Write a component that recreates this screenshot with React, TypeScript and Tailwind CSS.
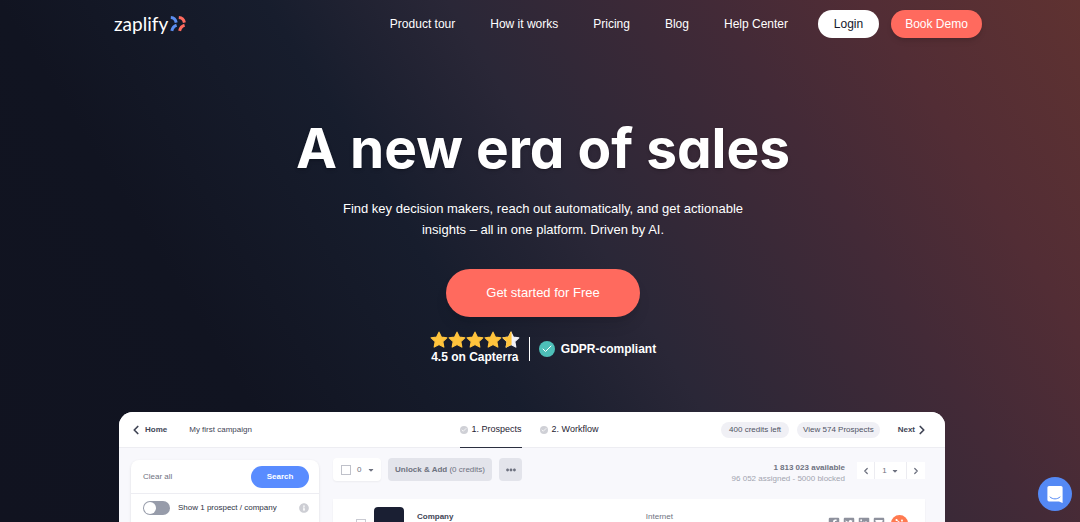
import { Check, ChevronLeft, ChevronRight } from "lucide-react";
import { FaCaretDown, FaEllipsisH, FaFacebookSquare, FaHubspot, FaInfoCircle, FaLinkedin, FaEnvelopeSquare, FaTwitterSquare } from "react-icons/fa";

const navLinks = ["Product tour", "How it works", "Pricing", "Blog", "Help Center"];

const STAR = "M8 1l2.1 4.4 4.9 0.6-3.6 3.4 0.9 4.9L8 11.9 3.7 14.3l0.9-4.9L1 6l4.9-0.6z";
const STAR_LEFT = "M8 1V11.9L3.7 14.3l0.9-4.9L1 6l4.9-0.6z";

function Logo() {
  return (
    <a href="#" className="flex items-center gap-0.5 text-white">
      <span className="font-[Lato,sans-serif] text-[19px] leading-7">zaplify</span>
      <svg viewBox="0 0 16 16" className="h-4 w-4" fill="none" strokeWidth="3">
        <path d="M0.8 1.6C3.8 1.8 5.6 3.4 6.2 6.6" stroke="#5b8def" />
        <path d="M6.6 9.2C4.6 9.8 2.6 11.6 1.8 14.8" stroke="#5b8def" />
        <path d="M8.8 1.6C11.8 1.8 13.8 3.4 14.4 6.6" stroke="#ff6a5e" />
        <path d="M14.6 9.2C12.4 9.8 10.4 11.6 9.6 14.8" stroke="#ff6a5e" />
      </svg>
    </a>
  );
}

function Header() {
  return (
    <header className="flex items-center justify-between pt-2.5 pr-[98px] pl-[114px]">
      <Logo />
      <nav className="flex items-center text-[12px] text-white">
        <div className="mr-[30px] flex gap-[35px]">
          {navLinks.map((label) => (
            <a key={label} href="#" className="whitespace-nowrap">
              {label}
            </a>
          ))}
        </div>
        <a href="#" className="mr-3 flex h-7 w-[61px] items-center justify-center rounded-full bg-white text-[#14172a]">
          Login
        </a>
        <a href="#" className="flex h-7 w-[91px] items-center justify-center rounded-full bg-[#ff6a5e] shadow-md">
          Book Demo
        </a>
      </nav>
    </header>
  );
}

function Star({ half = false }: { half?: boolean }) {
  return (
    <svg viewBox="0 0 16 16" className="h-[18px] w-[18px]" strokeWidth="1" strokeLinejoin="round">
      <path d={STAR} fill={half ? "#f1f1f6" : "#ffc43d"} stroke={half ? "#f1f1f6" : "#ffc43d"} />
      {half && <path d={STAR_LEFT} fill="#ffc43d" stroke="#ffc43d" />}
    </svg>
  );
}

function Hero() {
  return (
    <section className="flex flex-col items-center pt-[76px] pl-1.5 text-center text-white">
      <h1 className="font-[Inter,sans-serif] text-[55px] leading-[68px] font-bold [font-feature-settings:'cv11'] text-shadow-md">
        A new era of sales
      </h1>
      <p className="mt-4 w-[420px] text-[13px] leading-[21px]">
        Find key decision makers, reach out automatically, and get actionable insights – all in one platform. Driven by AI.
      </p>
      <button className="mt-[29px] h-12 w-[194px] rounded-full bg-[#ff6a5e] text-[13px] shadow-lg">Get started for Free</button>

      <div className="mt-3.5 flex items-center text-[12px] font-bold">
        <div className="flex flex-col items-center">
          <div className="flex">
            <Star />
            <Star />
            <Star />
            <Star />
            <Star half />
          </div>
          <span className="leading-[17px]">4.5 on Capterra</span>
        </div>
        <span className="mx-[9px] h-6 w-px bg-white" />
        <span className="mr-1.5 flex h-4 w-4 items-center justify-center rounded-full bg-[#4dbfb8]">
          <Check className="h-3 w-3" strokeWidth={2} />
        </span>
        <span>GDPR-compliant</span>
      </div>
    </section>
  );
}

function StepTab({ label, active = false }: { label: string; active?: boolean }) {
  return (
    <button
      className={
        active
          ? "flex h-full items-center gap-1 border-b border-[#2b2f3f] whitespace-nowrap"
          : "flex h-full items-center gap-1 border-b border-transparent whitespace-nowrap"
      }
    >
      <span className="flex h-2 w-2 items-center justify-center rounded-full bg-[#cfd0d6]">
        <Check className="h-1.5 w-1.5 text-white" strokeWidth={3} />
      </span>
      {label}
    </button>
  );
}

function AppBar() {
  return (
    <div className="grid h-9 grid-cols-[1fr_auto_1fr] items-center border-b border-[#ededf2] bg-white pr-5 pl-3.5 text-[8px] font-bold text-[#414556]">
      <div className="flex items-center">
        <a href="#" className="flex items-center gap-0.5">
          <ChevronLeft className="-ml-1 h-3.5 w-3.5" strokeWidth={3} />
          Home
        </a>
        <span className="ml-[22px] font-normal">My first campaign</span>
      </div>
      <div className="flex h-9 gap-[18px] text-[9px] font-normal text-[#1f2333]">
        <StepTab label="1. Prospects" active />
        <StepTab label="2. Workflow" />
      </div>
      <div className="flex items-center justify-end">
        <span className="rounded-full bg-[#f0f0f5] px-2 py-0.5 leading-3 font-normal whitespace-nowrap text-[#4f5363]">400 credits left</span>
        <button className="ml-2 rounded-full bg-[#f0f0f5] px-1.5 py-0.5 leading-3 font-normal whitespace-nowrap text-[#4f5363]">
          View 574 Prospects
        </button>
        <button className="ml-[18px] flex items-center">
          Next
          <ChevronRight className="-mr-1 h-3.5 w-3.5" strokeWidth={3} />
        </button>
      </div>
    </div>
  );
}

function FilterPanel() {
  return (
    <aside className="mt-3 w-[188px] shrink-0 rounded-t-lg bg-white text-[8px] shadow">
      <div className="flex h-[34px] items-center justify-between border-b border-[#ededf2] pr-2.5 pl-3">
        <button className="text-[#6e7280]">Clear all</button>
        <button className="h-[22px] w-[58px] rounded-full bg-[#598cff] font-bold text-white">Search</button>
      </div>
      <div className="flex h-7 items-center pr-2.5 pl-3 text-[#2f3344]">
        <label className="flex items-center gap-2">
          <input type="checkbox" className="peer sr-only" />
          <span className="flex h-3.5 w-[27px] rounded-full bg-[#979caa] p-px peer-checked:justify-end">
            <span className="h-3 w-3 rounded-full bg-white" />
          </span>
          Show 1 prospect / company
        </label>
        <FaInfoCircle className="ml-auto h-2.5 w-2.5 text-[#cdced4]" />
      </div>
    </aside>
  );
}

function Toolbar() {
  return (
    <div className="flex h-[51px] items-start pt-2.5 text-[8px] text-[#6e7280]">
      <div className="flex h-[23px] w-12 items-center rounded bg-white pl-2 shadow-xs">
        <input type="checkbox" aria-label="Select all" className="h-2.5 w-2.5 appearance-none border border-[#bfc1ca]" />
        <span className="mr-1.5 ml-1.5">0</span>
        <FaCaretDown className="h-2 w-2" />
      </div>
      <button className="ml-[7px] h-[23px] w-[104px] rounded bg-[#e3e4eb] font-bold whitespace-nowrap">
        Unlock & Add <span className="font-normal">(0 credits)</span>
      </button>
      <button aria-label="More actions" className="ml-[7px] flex h-[23px] w-[23px] items-center justify-center rounded bg-[#e3e4eb]">
        <FaEllipsisH className="h-2.5 w-2.5" />
      </button>
      <div className="ml-auto pt-1 text-right leading-[11px]">
        <div className="font-bold">1 813 023 available</div>
        <div className="text-[#a2a5b0]">96 052 assigned - 5000 blocked</div>
      </div>
      <div className="mt-1 ml-3 flex h-[17px] items-stretch divide-x divide-[#ececf1] bg-white">
        <button aria-label="Previous page" className="flex w-[18px] items-center justify-center">
          <ChevronLeft className="h-2.5 w-2.5" strokeWidth={3} />
        </button>
        <button className="flex w-8 items-center justify-center gap-1">
          1 <FaCaretDown className="h-2 w-2" />
        </button>
        <button aria-label="Next page" className="flex w-[18px] items-center justify-center">
          <ChevronRight className="h-2.5 w-2.5" strokeWidth={3} />
        </button>
      </div>
    </div>
  );
}

function ProspectRow() {
  return (
    <div className="flex h-16 items-start bg-white pr-[17px] pl-[23px] text-[8px] leading-3 text-[#6e7280] shadow-xs">
      <input type="checkbox" aria-label="Select prospect" className="mt-5 mr-2 h-2.5 w-2.5 appearance-none border border-[#c9cad2]" />
      <div className="mt-2 mr-[13px] h-[30px] w-[30px] rounded bg-[#1a1f33]" />
      <div className="mt-3 flex-1 font-bold text-[#414556]">Company</div>
      <div className="mt-3 mr-[155px]">Internet</div>
      <div className="mt-[18px] flex gap-[3px] text-[#8e919d]">
        <FaFacebookSquare className="h-3 w-3" />
        <FaTwitterSquare className="h-3 w-3" />
        <FaLinkedin className="h-3 w-3" />
        <FaEnvelopeSquare className="h-3 w-3" />
      </div>
      <span className="mt-4 ml-1.5 flex h-[17px] w-[17px] items-center justify-center rounded-full bg-[#ff7a50] text-white">
        <FaHubspot className="h-2.5 w-2.5" />
      </span>
    </div>
  );
}

function ProductPreview() {
  return (
    <section className="mt-[46px] mr-[135px] ml-[119px] overflow-hidden rounded-t-[14px] bg-[#f8f8fc]">
      <AppBar />
      <div className="flex items-start gap-3.5 pr-5 pl-3">
        <FilterPanel />
        <div className="min-w-0 flex-1">
          <Toolbar />
          <ProspectRow />
        </div>
      </div>
    </section>
  );
}

function ChatLauncher() {
  return (
    <button
      aria-label="Open chat"
      className="fixed right-2 bottom-[11px] flex h-[34px] w-[34px] items-center justify-center rounded-full bg-[#5489f5]"
    >
      <svg viewBox="0 0 16 17" className="h-[17px] w-4">
        <path d="M2 0H14a1.6 1.6 0 0 1 1.6 1.6V17L12 15.4H2A1.6 1.6 0 0 1 0.4 13.8V1.6A1.6 1.6 0 0 1 2 0z" fill="#fff" />
        <path d="M3 11C5.8 13.6 10.2 13.6 13 11" fill="none" stroke="#5489f5" strokeLinecap="round" />
      </svg>
    </button>
  );
}

export default function App() {
  return (
    <main className="h-screen overflow-hidden bg-[linear-gradient(58deg,#111320_0%,#111421_23%,#171d2d_42%,#2a2737_55%,#432a37_74%,#522d35_85%,#5f3231_100%)] font-['Liberation_Sans',Arial,sans-serif]">
      <Header />
      <Hero />
      <ProductPreview />
      <ChatLauncher />
    </main>
  );
}
